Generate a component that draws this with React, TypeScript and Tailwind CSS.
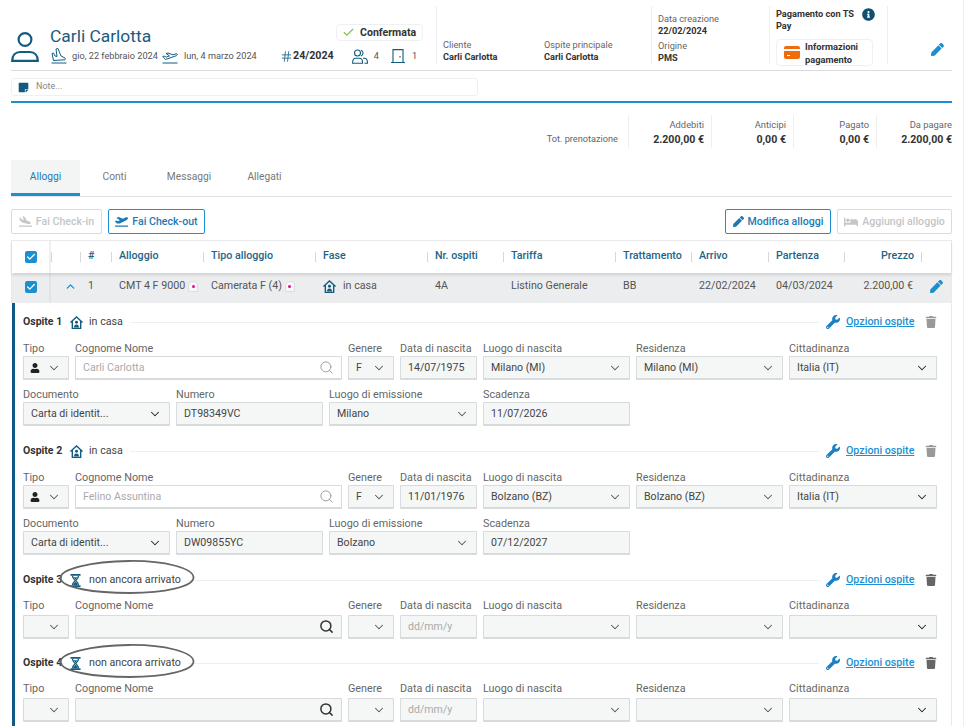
import { Check, ChevronDown, ChevronUp, Search, Hash } from "lucide-react";
import { FaBed, FaInfoCircle, FaPen, FaPlaneArrival, FaPlaneDeparture, FaStickyNote, FaTrash, FaUser, FaWrench } from "react-icons/fa";

function UserOutline() {
  return (
    <svg viewBox="0 0 28 30" className="w-[28px] h-[30px] text-[#135c80]" fill="none" stroke="currentColor" strokeWidth="2.2">
      <circle cx="14" cy="7.500" r="6.400" />
      <path d="M1.200 28.800c0-5.300 3-8.800 8-8.800h9.600c5 0 8 3.500 8 8.800z" />
    </svg>
  );
}

function LandingIcon() {
  return (
    <svg viewBox="0 0 16 16" className="size-[16px] text-[#135c80]" fill="none" stroke="currentColor" strokeWidth="1">
      <path d="M.5 15h15" />
      <path d="M2.500 12.500 1 5.500l1.500-.5 1.500 3 2 .5-1-7.500 2-.5 3 7.500 4 2c.8.600.400 2-.6 1.800z" />
    </svg>
  );
}

function TakeoffIcon() {
  return (
    <svg viewBox="0 0 16 16" className="size-[16px] text-[#135c80]" fill="none" stroke="currentColor" strokeWidth="1">
      <path d="M.5 15h15" />
      <path d="M3.500 11.500.7 8.500l1.500-.4 2 1 3.300-1.200L4 5.500l2-.5 5 1.800 3-1c1.500-.2 1.800 1.200.6 1.800z" />
    </svg>
  );
}

function GuestsIcon() {
  return (
    <svg viewBox="0 0 16 15" className="w-[16px] h-[15px] text-[#135c80]" fill="none" stroke="currentColor" strokeWidth="1.100">
      <circle cx="5.500" cy="4" r="3" />
      <path d="M.6 14.300c0-3.500 1.400-5 3-5h4c1.600 0 3 1.500 3 5z" />
      <path d="M9 1.200a3 3 0 0 1 0 5.700M11 9.300h1.500c1.600 0 3 1.500 3 5h-3" />
    </svg>
  );
}

function DoorIcon() {
  return (
    <svg viewBox="0 0 14 14" className="size-[14px] text-[#135c80]" fill="none" stroke="currentColor" strokeWidth="1.100">
      <path d="M0 13.500h14M2 13.500V.6h10v12.900M9 7v1.400" />
    </svg>
  );
}

function HouseIcon() {
  return (
    <svg viewBox="0 0 14 14" className="size-[13px] text-[#135c80]" fill="none" stroke="currentColor" strokeWidth="1.500">
      <path d="M.4 7 7 1l6.600 6M2.500 5.500v8h9v-8" />
      <circle cx="7" cy="6.700" r="1.600" fill="currentColor" stroke="none" />
      <path d="M4.300 12.500c0-2.300 1-3.300 2.700-3.300s2.700 1 2.700 3.300z" fill="currentColor" stroke="none" />
    </svg>
  );
}

function HourglassIcon() {
  return (
    <svg viewBox="0 0 12 14" className="w-[11px] h-[13px] text-[#135c80]" fill="currentColor">
      <path d="M.5 0h11v1.800H.5zM.5 12.200h11V14H.5z" />
      <path d="M2 1.800h1.500C3.700 4 5 5.300 7 7 5 8.700 3.700 10 3.500 12.200H2C2.200 9.800 3.500 8.200 5 7 3.500 5.800 2.200 4.200 2 1.800z" />
      <path d="M10 1.800H8.500C8.300 4 7 5.300 5 7c2 1.700 3.300 3 3.500 5.200H10C9.800 9.800 8.500 8.200 7 7c1.500-1.200 2.800-2.800 3-5.200z" />
      <path d="M4 3.500h4L6 6zM3.500 12.200c.5-1.800 1.300-2.800 2.500-3.800 1.200 1 2 2 2.500 3.800z" />
    </svg>
  );
}

function CardIcon() {
  return (
    <svg viewBox="0 0 16 13" className="w-[16px] h-[13px] shrink-0 text-[#ee6c0c]" fill="currentColor">
      <path d="M2 0h12a2 2 0 0 1 2 2v1H0V2a2 2 0 0 1 2-2zM0 5h16v6a2 2 0 0 1-2 2H2a2 2 0 0 1-2-2zM3 9v1h3V9z" />
    </svg>
  );
}

function RoomBadge() {
  return (
    <span className="inline-flex items-center justify-center w-[10px] h-[11px] rounded-t-[4px] bg-[#f8f7f7] border border-[#dddddd]">
      <span className="size-[3px] rounded-full bg-[#d6138c]" />
    </span>
  );
}

function Checkbox() {
  return (
    <span className="flex items-center justify-center size-[12px] rounded-[2px] bg-[#1b8fd2]">
      <Check className="size-[10px] text-white" strokeWidth={3} />
    </span>
  );
}

function Info({ label, value, className = "" }: { label: string; value: string; className?: string }) {
  return (
    <div className={className}>
      <p className="text-[9.2px] leading-[12px] text-[#666]">{label}</p>
      <p className="text-[9.2px] leading-[12px] font-bold text-[#333]">{value}</p>
    </div>
  );
}

function Header() {
  return (
    <div className="flex h-[65px] mt-[6px] border-b border-[#d9dcdd]">
      <div className="w-[425px] shrink-0 flex">
        <div className="w-[39px] shrink-0 pt-[26px]">
          <UserOutline />
        </div>
        <div className="flex-1 flex flex-col">
          <div className="flex items-start pt-[19px] h-[41px]">
            <p className="text-[17.4px] leading-[22px] text-[#1c5a7d]">Carli Carlotta</p>
            <div className="ml-auto mr-[13px] flex items-center gap-[5px] h-[17px] w-[87px] pl-[5px] -mt-[1px] rounded-[4px] border border-[#eef1f4]">
              <Check className="size-[13px] text-[#79c143]" />
              <span className="text-[10.6px] font-bold text-[#333]">Confermata</span>
            </div>
          </div>
          <div className="flex items-center h-[18px] text-[9.2px] text-[#555]">
            <span className="mr-[5px] ml-px"><LandingIcon /></span>
            <span className="w-[85px] whitespace-nowrap">gio, 22 febbraio 2024</span>
            <span className="ml-[5px] mr-[6px]"><TakeoffIcon /></span>
            <span className="w-[73px] whitespace-nowrap">lun, 4 marzo 2024</span>
            <Hash className="size-[13px] text-[#135c80] ml-[23px]" strokeWidth={1.500} />
            <span className="text-[10.7px] font-bold text-[#333]">24/2024</span>
            <span className="ml-[18px]"><GuestsIcon /></span>
            <span className="ml-[6px]">4</span>
            <span className="ml-[12px]"><DoorIcon /></span>
            <span className="ml-[7px]">1</span>
          </div>
        </div>
      </div>
      <div className="w-[215px] shrink-0 mb-[6px] border-l border-[#eceeef] pl-[6px] pt-[33px] flex">
        <Info label="Cliente" value="Carli Carlotta" className="w-[101px]" />
        <Info label="Ospite principale" value="Carli Carlotta" />
      </div>
      <div className="w-[118px] shrink-0 mb-[6px] border-l border-[#eceeef] pl-[6px] pt-[7px] flex flex-col gap-[3px]">
        <Info label="Data creazione" value="22/02/2024" />
        <Info label="Origine" value="PMS" />
      </div>
      <div className="w-[118px] shrink-0 mb-[6px] border-l border-[#eceeef] pl-[6px] pt-[2px]">
        <div className="flex items-start w-[100px] relative">
          <p className="text-[9.2px] leading-[12px] font-bold text-[#333] w-[86px]">Pagamento con TS Pay</p>
          <FaInfoCircle className="size-[13px] text-[#0f4f74]" />
        </div>
        <div className="flex items-center w-[97px] h-[27px] mt-[7px] pl-[7px] gap-[5px] rounded-[4px] border border-[#eef1f4]">
          <CardIcon />
          <p className="text-[9.3px] leading-[13px] font-bold text-[#333]">Informazioni pagamento</p>
        </div>
      </div>
      <div className="flex-1 mb-[6px] border-l border-[#eceeef] flex items-center justify-end pr-[8px] pt-[28px]">
        <FaPen className="size-[13px] text-[#1b8fd2]" />
      </div>
    </div>
  );
}

function Total({ label, value, width }: { label: string; value: string; width: string }) {
  return (
    <div className={`${width} border-l border-[#eceeef] pr-[7px] last:pr-0 text-right pt-[3px]`}>
      <p className="text-[9.4px] leading-[14px] text-[#666]">{label}</p>
      <p className="text-[10.6px] leading-[15px] font-bold text-[#333]">{value}</p>
    </div>
  );
}

function Tabs() {
  return (
    <div className="flex mt-[12px] h-[37px] border-b border-[#dfe2e3] text-[10.2px] text-[#777]">
      <div className="w-[69px] flex items-center justify-center bg-[#f3f4f4] border-b-[3px] border-[#1b8fd2] text-[#1b7ab5] h-[36px]">Alloggi</div>
      <div className="w-[69px] flex items-center justify-center pb-[3px]">Conti</div>
      <div className="w-[80px] flex items-center justify-center pb-[3px]">Messaggi</div>
      <div className="w-[71px] flex items-center justify-center pb-[3px]">Allegati</div>
    </div>
  );
}

function Toolbar() {
  const blue = "flex items-center justify-center h-[25px] gap-[4px] rounded-[2px] border border-[#1b8fd2] text-[10.6px] font-medium text-[#1b7ab5]";
  const off = "flex items-center justify-center h-[25px] gap-[4px] rounded-[2px] border border-[#d9dbdc] text-[10.6px] font-medium text-[#c4c6c7]";
  return (
    <div className="flex mt-[12px] gap-[6px]">
      <div className={`${off} w-[91px]`}><FaPlaneArrival className="size-[13px]" />Fai Check-in</div>
      <div className={`${blue} w-[97px]`}><FaPlaneDeparture className="size-[13px]" />Fai Check-out</div>
      <div className={`${blue} w-[106px] ml-auto`}><FaPen className="size-[11px]" />Modifica alloggi</div>
      <div className={`${off} w-[115px]`}><FaBed className="size-[14px]" />Aggiungi alloggio</div>
    </div>
  );
}

const cols = "grid grid-cols-[39px_29px_31px_92px_112px_112px_76px_112px_76px_77px_76px_77px_1fr]";

function Th({ children, right = false }: { children?: React.ReactNode; right?: boolean }) {
  return (
    <div className="flex items-center h-full pb-px">
      <span className="w-px h-[10px] bg-[#d5d8d9] shrink-0" />
      <span className={`flex-1 text-[10.7px] font-medium text-[#1d6487] ${right ? "text-right pr-[7px]" : "pl-[7px]"}`}>{children}</span>
    </div>
  );
}

function Td({ children, right = false }: { children?: React.ReactNode; right?: boolean }) {
  return (
    <div className={`flex items-center gap-[3px] pb-[3px] text-[10.7px] text-[#555] ${right ? "justify-end pr-[8px]" : "pl-[8px]"}`}>{children}</div>
  );
}

function RoomTable() {
  return (
    <div className="mt-[6px] border-x border-t border-[#e8eaeb]">
      <div className={`${cols} h-[32px] shadow-[0_2px_3px_rgba(0,0,0,0.12)] relative`}>
        <div className="flex items-center justify-center border-r-2 border-[#eeefef]"><Checkbox /></div>
        <Th />
        <Th>#</Th>
        <Th>Alloggio</Th>
        <Th>Tipo alloggio</Th>
        <Th>Fase</Th>
        <Th>Nr. ospiti</Th>
        <Th>Tariffa</Th>
        <Th>Trattamento</Th>
        <Th>Arrivo</Th>
        <Th>Partenza</Th>
        <Th right>Prezzo</Th>
        <Th />
      </div>
      <div className={`${cols} h-[30px] bg-[#ecedee]`}>
        <div className="flex items-center justify-center border-r-2 border-[#e2e3e4] pb-[2px]"><Checkbox /></div>
        <div className="flex items-center pl-[13px] pb-[3px]"><ChevronUp className="size-[13px] text-[#1b8fd2]" strokeWidth={2.500} /></div>
        <Td>1</Td>
        <Td>CMT 4 F 9000<RoomBadge /></Td>
        <Td>Camerata F (4)<RoomBadge /></Td>
        <Td><HouseIcon /><span className="ml-[4px]">in casa</span></Td>
        <Td>4A</Td>
        <Td>Listino Generale</Td>
        <Td>BB</Td>
        <Td>22/02/2024</Td>
        <Td>04/03/2024</Td>
        <Td right>2.200,00 €</Td>
        <div className="flex items-center pl-[9px] pb-[3px]"><FaPen className="size-[13px] text-[#1b8fd2]" /></div>
      </div>
    </div>
  );
}

function Field({
  label,
  value,
  white = false,
  select = false,
  search,
  person = false,
  placeholder = false,
  darkChevron = false,
  loose = false,
}: {
  label: string;
  value?: string;
  white?: boolean;
  select?: boolean;
  search?: "light" | "dark";
  person?: boolean;
  placeholder?: boolean;
  darkChevron?: boolean;
  loose?: boolean;
}) {
  return (
    <div className="min-w-0">
      <p className={`text-[10.8px] leading-[13px] text-[#666] whitespace-nowrap ${loose ? "mb-[3px]" : "mb-[1px]"}`}>{label}</p>
      <div className={`flex items-center h-[24px] px-[7px] border border-[#d8dbdb] border-b-2 rounded-[1px] text-[10.6px] ${white ? "bg-white" : "bg-[#f5f7f6]"} ${placeholder ? "text-[#aaa]" : "text-[#444]"}`}>
        {person && <FaUser className="size-[10px] text-[#222] -ml-[1px]" />}
        <span className="flex-1 truncate">{value}</span>
        {select && <ChevronDown className={`size-[14px] ${darkChevron ? "text-[#222]" : "text-[#555]"}`} strokeWidth={1.800} />}
        {search && <Search className={`size-[15px] ${search === "dark" ? "text-[#333]" : "text-[#999]"}`} strokeWidth={search === "dark" ? 2.400 : 1.500} />}
      </div>
    </div>
  );
}

type Guest = {
  title: string;
  phase: string;
  arrived: boolean;
  name?: string;
  birth?: string;
  place?: string;
  docNumber?: string;
  issued?: string;
  expiry?: string;
};

function GuestBlock({ g }: { g: Guest }) {
  const loose = !g.arrived;
  return (
    <div className={g.arrived ? "pb-px" : ""}>
      <div className="flex items-center h-[16px]">
        <span className="text-[10.5px] font-bold text-[#333] w-[47px] whitespace-nowrap">{g.title}</span>
        <span className="w-[12px] shrink-0">{g.arrived ? <HouseIcon /> : <HourglassIcon />}</span>
        <span className="text-[10.7px] text-[#444] ml-[7px]">{g.phase}</span>
        <span className="flex-1 h-px bg-[#eef0f0] mx-[7px]" />
        <FaWrench className="size-[14px] text-[#1b7fc4] mr-[6px]" />
        <a className="text-[10.7px] font-medium text-[#1b8fd2] underline w-[70px] whitespace-nowrap">Opzioni ospite</a>
        <FaTrash className={`size-[12px] ml-[9px] ${g.arrived ? "text-[#999]" : "text-[#666]"}`} />
      </div>
      <div className={`grid grid-cols-[46px_267px_46px_77px_147px_147px_148px] gap-x-[6px] ${g.arrived ? "mt-[12px]" : "mt-[11px]"}`}>
        <Field loose={loose} label="Tipo" select person={g.arrived} />
        <Field loose={loose} label="Cognome Nome" value={g.name} white={g.arrived} placeholder search={g.arrived ? "light" : "dark"} />
        <Field loose={loose} label="Genere" value={g.arrived ? "F" : ""} select />
        <Field loose={loose} label="Data di nascita" value={g.birth ?? "dd/mm/y"} placeholder={!g.birth} />
        <Field loose={loose} label="Luogo di nascita" value={g.place} select />
        <Field loose={loose} label="Residenza" value={g.place} select />
        <Field loose={loose} label="Cittadinanza" value={g.arrived ? "Italia (IT)" : ""} select darkChevron />
      </div>
      {g.arrived && (
        <div className="grid grid-cols-[147px_147px_148px_147px] gap-x-[6px] mt-[8px]">
          <Field label="Documento" value="Carta di identit..." select darkChevron />
          <Field label="Numero" value={g.docNumber} />
          <Field label="Luogo di emissione" value={g.issued} select />
          <Field label="Scadenza" value={g.expiry} />
        </div>
      )}
    </div>
  );
}

const guests: Guest[] = [
  { title: "Ospite 1", phase: "in casa", arrived: true, name: "Carli Carlotta", birth: "14/07/1975", place: "Milano (MI)", docNumber: "DT98349VC", issued: "Milano", expiry: "11/07/2026" },
  { title: "Ospite 2", phase: "in casa", arrived: true, name: "Felino Assuntina", birth: "11/01/1976", place: "Bolzano (BZ)", docNumber: "DW09855YC", issued: "Bolzano", expiry: "07/12/2027" },
  { title: "Ospite 3", phase: "non ancora arrivato", arrived: false },
  { title: "Ospite 4", phase: "non ancora arrivato", arrived: false },
];

function Ring({ top }: { top: string }) {
  return (
    <svg viewBox="0 0 136 34" className={`absolute left-[59px] ${top} w-[136px] h-[34px] text-[#666]`} fill="none" stroke="currentColor" strokeWidth="1.800">
      <path d="M1.500 18C1 9 32 1.500 70 1c35-.5 64.500 7 64.500 16.500 0 9-29 15.500-63.500 15.500C36 33 2 28 1.500 18z" />
    </svg>
  );
}

export default function App() {
  return (
    <div className="relative w-[966px] h-[726px] overflow-hidden bg-white font-['Roboto',sans-serif]">
      <div className="w-[941px] ml-[11px]">
        <Header />
        <div className="flex items-center gap-[7px] w-[467px] h-[18px] mt-[7px] pl-[6px] rounded-[3px] border border-[#eef1f4]">
          <FaStickyNote className="size-[11px] text-[#135c80]" />
          <span className="text-[9px] text-[#888]">Note...</span>
        </div>
        <div className="h-[2px] mt-[5px] bg-[#1b8fd2]" />
        <div className="flex justify-end items-stretch h-[33px] mt-[12px]">
          <p className="self-end pb-[2px] pr-[10px] text-[9.2px] leading-[14px] text-[#666]">Tot. prenotazione</p>
          <Total width="w-[83px]" label="Addebiti" value="2.200,00 €" />
          <Total width="w-[82px]" label="Anticipi" value="0,00 €" />
          <Total width="w-[83px]" label="Pagato" value="0,00 €" />
          <Total width="w-[76px]" label="Da pagare" value="2.200,00 €" />
        </div>
        <Tabs />
        <Toolbar />
        <RoomTable />
        <div className="border-r border-[#e8eaeb] border-l-[3px] border-l-[#0f5a85] ml-px pl-[8px] pr-[14px] pt-[11px] pb-[20px] flex flex-col gap-[16px]">
          {guests.map((g) => (
            <GuestBlock key={g.title} g={g} />
          ))}
        </div>
      </div>
      <Ring top="top-[560px]" />
      <Ring top="top-[644px]" />
      <div className="absolute right-[2px] top-0 bottom-0 w-px bg-[#eceeef]" />
    </div>
  );
}
